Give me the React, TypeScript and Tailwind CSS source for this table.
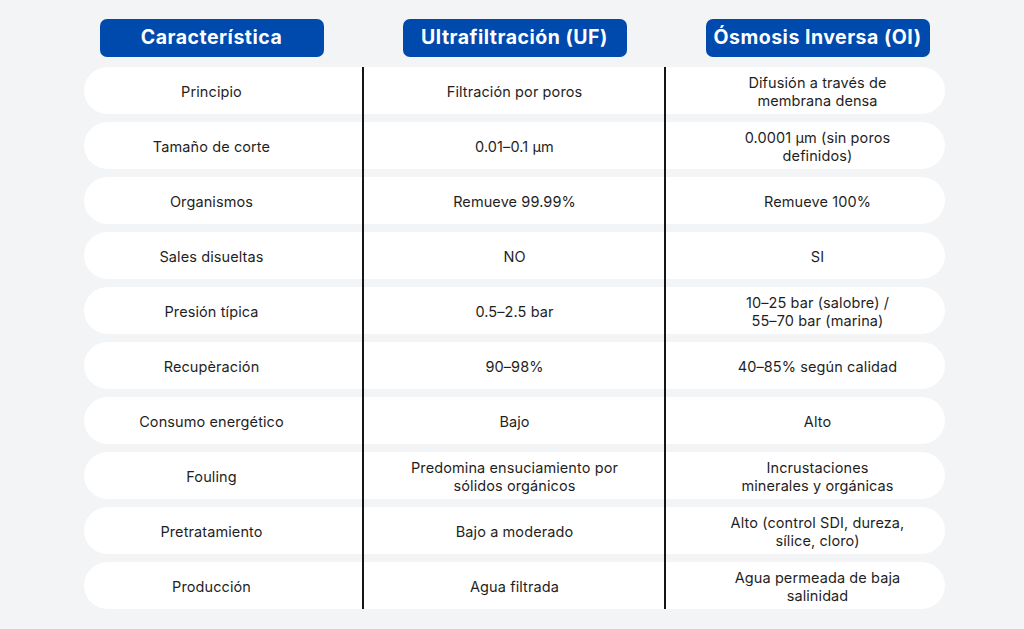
const HEADERS = ['Característica', 'Ultrafiltración (UF)', 'Ósmosis Inversa (OI)'];

const ROWS: string[][][] = [
  [['Principio'], ['Filtración por poros'], ['Difusión a través de', 'membrana densa']],
  [['Tamaño de corte'], ['0.01–0.1 µm'], ['0.0001 µm (sin poros', 'definidos)']],
  [['Organismos'], ['Remueve 99.99%'], ['Remueve 100%']],
  [['Sales disueltas'], ['NO'], ['SI']],
  [['Presión típica'], ['0.5–2.5 bar'], ['10–25 bar (salobre) /', '55–70 bar (marina)']],
  [['Recupèración'], ['90–98%'], ['40–85% según calidad']],
  [['Consumo energético'], ['Bajo'], ['Alto']],
  [['Fouling'], ['Predomina ensuciamiento por', 'sólidos orgánicos'], ['Incrustaciones', 'minerales y orgánicas']],
  [['Pretratamiento'], ['Bajo a moderado'], ['Alto (control SDI, dureza,', 'sílice, cloro)']],
  [['Producción'], ['Agua filtrada'], ['Agua permeada de baja', 'salinidad']],
];

export default function App() {
  return (
    <div
      className="w-[1024px] h-[629px] bg-[#f3f4f6] overflow-hidden"
      style={{ fontFamily: 'Inter, "Noto Sans", sans-serif' }}
    >
      <div className="ml-[60px] w-[909px] pt-[19px]">
        {/* encabezados */}
        <div className="grid grid-cols-3">
          {HEADERS.map((h) => (
            <div key={h} className="flex justify-center">
              <div className="w-[224px] h-[38px] rounded-[7px] bg-[#0049ad] flex items-center justify-center text-white font-bold text-[19.5px] tracking-[0.5px]">
                {h}
              </div>
            </div>
          ))}
        </div>

        {/* filas */}
        <div className="relative mt-[10px] flex flex-col gap-[8px]">
          {ROWS.map((row, i) => (
            <div key={i} className="mx-[24px] h-[47px] rounded-full bg-white">
              <div className="-mx-[24px] h-full grid grid-cols-3 items-center">
                {row.map((cell, j) => (
                  <div key={j} className="text-center text-[14.5px] leading-[18px] text-[#1f1f1f] pt-[3px] tracking-[0.1px]">
                    {cell.map((line) => (
                      <div key={line}>{line}</div>
                    ))}
                  </div>
                ))}
              </div>
            </div>
          ))}
          <div className="absolute top-0 bottom-0 left-[302px] w-[2px] bg-[#151515]" />
          <div className="absolute top-0 bottom-0 left-[604px] w-[2px] bg-[#151515]" />
        </div>
      </div>
    </div>
  );
}
